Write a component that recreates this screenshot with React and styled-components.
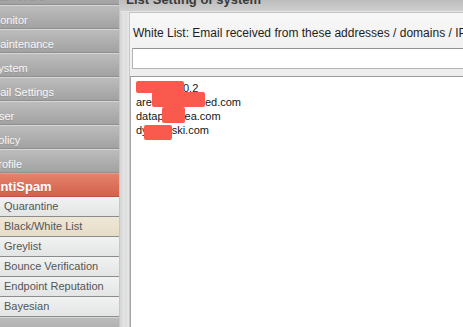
import React from "react";
import styled, { createGlobalStyle } from "styled-components";

const GlobalStyle = createGlobalStyle`
  html, body {
    margin: 0;
    padding: 0;
    background: #fff;
  }
  body {
    font-family: "Liberation Sans", Arial, sans-serif;
    overflow: hidden;
  }
`;

const Page = styled.div`
  display: flex;
  width: 463px;
  height: 327px;
  overflow: hidden;
`;

const Sidebar = styled.nav`
  flex: none;
  width: 119px;
  overflow: hidden;
  background: #a6a6a6;
`;

const SideList = styled.div`
  width: 140px;
  margin: -19px 0 0 -12px;
`;

const NavItem = styled.div`
  box-sizing: border-box;
  height: 24px;
  padding: 7px 0 0 3px;
  font-size: 11px;
  line-height: 14px;
  color: #f7f7f7;
  white-space: nowrap;
  background: linear-gradient(#bcbcbc, #a2a2a2);
  border-top: 1px solid #d6d6d6;
  border-bottom: 1px solid #8f8f8f;
  text-shadow: 0 1px 0 rgba(0, 0, 0, 0.12);
`;

const NavHeader = styled(NavItem)`
  padding-top: 5px;
  font-size: 13px;
  line-height: 15px;
  font-weight: bold;
  color: #fff;
  background: linear-gradient(#e5816a, #d2624c);
  border-top-color: #ea9a86;
  border-bottom-color: #b9533f;
`;

const SubItem = styled.div`
  box-sizing: border-box;
  height: 20px;
  padding-left: 16px;
  font-size: 11px;
  line-height: 19px;
  color: #555;
  white-space: nowrap;
  background: ${(p) =>
    p.$selected
      ? "linear-gradient(#efe7d6, #e6dcc8)"
      : "linear-gradient(#f1f3f3, #e3e5e5)"};
  border-bottom: 1px solid #8c8c8c;
`;

const Main = styled.main`
  flex: 1;
  min-width: 0;
  display: flex;
  flex-direction: column;
  background: linear-gradient(90deg, #d4d4d4, #e4e4e4 4px, #dcdcdc 6px, #e6e6e6 8px);
  border-left: 1px solid #c6c6c6;
`;

const TitleBar = styled.div`
  flex: none;
  height: 11px;
  overflow: hidden;
  background: linear-gradient(#bdbdbd, #cfcfcf);
  border-bottom: 1px solid #e4e4e4;
`;

const Title = styled.h2`
  margin: -8px 0 0 6px;
  font-size: 13px;
  line-height: 16px;
  font-weight: bold;
  color: #3a3a3a;
  white-space: nowrap;
`;

const Panel = styled.section`
  flex: 1;
  display: flex;
  flex-direction: column;
  margin: 0 -40px 0 9px;
  background: linear-gradient(#f7f7f7, #ececec 70px, #ececec);
  border-top: 1px solid #c4c4c4;
  border-left: 1px solid #c8c8c8;
`;

const Label = styled.div`
  padding: 13px 0 0 3px;
  font-size: 12px;
  line-height: 14px;
  color: #1e1e1e;
  white-space: nowrap;
`;

const TextInput = styled.input`
  box-sizing: border-box;
  display: block;
  height: 21px;
  margin: 8px 0 0 2px;
  padding: 0 4px;
  background: #fff;
  border: 1px solid #b4b4b4;
  border-top-color: #929292;
  outline: none;
`;

const ListBox = styled.div`
  position: relative;
  flex: 1;
  margin-top: 7px;
  padding: 4px 0 0 5px;
  background: #fff;
  border-top: 1px solid #9a9a9a;
  border-left: 1px solid #a6a6a6;
  font-size: 11px;
  line-height: 14px;
  color: #151515;
`;

const Line = styled.div`
  white-space: nowrap;
`;

const Gap = styled.span`
  display: inline-block;
  width: ${(p) => p.$w}px;
`;

const Redaction = styled.span`
  position: absolute;
  left: ${(p) => p.$x}px;
  top: ${(p) => p.$y}px;
  width: ${(p) => p.$w}px;
  height: ${(p) => p.$h}px;
  background: #fa5a4e;
  border-radius: 2px;
`;

const topItems = [
  "Dashboard",
  "Monitor",
  "Maintenance",
  "System",
  "Mail Settings",
  "User",
  "Policy",
  "Profile",
];

const subItems = [
  "Quarantine",
  "Black/White List",
  "Greylist",
  "Bounce Verification",
  "Endpoint Reputation",
  "Bayesian",
];

const redactions = [
  { x: 5, y: 4, w: 48, h: 12 },
  { x: 21, y: 15, w: 53, h: 15 },
  { x: 31, y: 30, w: 23, h: 16 },
  { x: 13, y: 48, w: 28, h: 15 },
];

export default function App() {
  return (
    <Page>
      <GlobalStyle />
      <Sidebar>
        <SideList>
          {topItems.map((item) => (
            <NavItem key={item}>{item}</NavItem>
          ))}
          <NavHeader>AntiSpam</NavHeader>
          {subItems.map((item) => (
            <SubItem key={item} $selected={item === "Black/White List"}>
              {item}
            </SubItem>
          ))}
          <NavItem>Report</NavItem>
        </SideList>
      </Sidebar>

      <Main>
        <TitleBar>
          <Title>List Setting of system</Title>
        </TitleBar>
        <Panel>
          <Label>
            White List: Email received from these addresses / domains / IP
            addresses will not be scanned
          </Label>
          <TextInput type="text" defaultValue="" />
          <ListBox>
            <Line>
              <Gap $w={47} />
              0.2
            </Line>
            <Line>
              are
              <Gap $w={53} />
              ed.com
            </Line>
            <Line>
              datap
              <Gap $w={21} />
              ea.com
            </Line>
            <Line>
              dy
              <Gap $w={24} />
              ski.com
            </Line>
            {redactions.map((r, i) => (
              <Redaction key={i} $x={r.x} $y={r.y} $w={r.w} $h={r.h} />
            ))}
          </ListBox>
        </Panel>
      </Main>
    </Page>
  );
}
